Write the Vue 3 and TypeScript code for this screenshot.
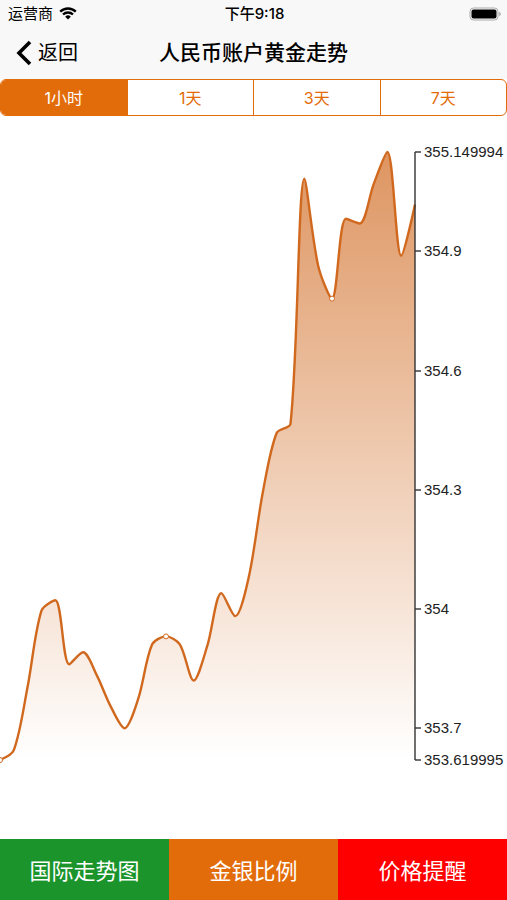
<script setup lang="ts">
import { computed, onBeforeUnmount, onMounted, ref } from 'vue'

interface Point {
  x: number
  y: number
}

const ranges = ['1小时', '1天', '3天', '7天']
const activeRange = ref(0)

const prices = [
  353.619995, 353.645, 353.805, 353.996, 354.022, 353.861, 353.891, 353.833,
  353.755, 353.7, 353.775, 353.911, 353.931, 353.911, 353.82, 353.909, 354.04,
  353.982, 354.083, 354.294, 354.443, 354.466, 355.083, 354.864, 354.781,
  354.982, 354.97, 355.068, 355.149994, 354.889, 355.018,
]
const ticks = [355.149994, 354.9, 354.6, 354.3, 354, 353.7, 353.619995]
const marked = [0, 12, 24]

const low = 353.619995
const high = 355.149994
const smoothness = 0.3
const margin = { top: 36, right: 92, bottom: 79 }

const chart = ref<SVGSVGElement | null>(null)
const size = ref({ width: 507, height: 723 })
let observer: ResizeObserver | undefined

function measure() {
  if (!chart.value) return
  const box = chart.value.getBoundingClientRect()
  size.value = { width: Math.round(box.width), height: Math.round(box.height) }
}

onMounted(() => {
  measure()
  observer = new ResizeObserver(measure)
  if (chart.value) observer.observe(chart.value)
})
onBeforeUnmount(() => observer?.disconnect())

const axisX = computed(() => size.value.width - margin.right)
const baseY = computed(() => size.value.height - margin.bottom)

function yOf(price: number): number {
  return baseY.value - ((price - low) / (high - low)) * (baseY.value - margin.top)
}

const points = computed<Point[]>(() =>
  prices.map((price, i) => ({
    x: (axisX.value * i) / (prices.length - 1),
    y: yOf(price),
  })),
)

function clamp(v: number, a: number, b: number): number {
  return Math.max(Math.min(a, b), Math.min(Math.max(a, b), v))
}

// Smooth curve whose control points never leave the span of their own segment.
const linePath = computed(() => {
  const pts = points.value
  let path = `M${pts[0].x} ${pts[0].y}`
  let out: Point = pts[0]
  for (let i = 1; i < pts.length; i++) {
    const prev = pts[i - 1]
    const p = pts[i]
    const next = pts[i + 1]
    let into: Point = p
    let nextOut: Point = p
    if (next) {
      const lenPrev = Math.hypot(p.x - prev.x, p.y - prev.y)
      const lenNext = Math.hypot(next.x - p.x, next.y - p.y)
      const ratio = lenNext / (lenNext + lenPrev)
      const ox = clamp(p.x + (next.x - prev.x) * smoothness * ratio, p.x, next.x)
      const oy = clamp(p.y + (next.y - prev.y) * smoothness * ratio, p.y, next.y)
      into = {
        x: clamp(p.x - ((ox - p.x) * lenPrev) / lenNext, prev.x, p.x),
        y: clamp(p.y - ((oy - p.y) * lenPrev) / lenNext, prev.y, p.y),
      }
      nextOut = {
        x: p.x + ((p.x - into.x) * lenNext) / lenPrev,
        y: p.y + ((p.y - into.y) * lenNext) / lenPrev,
      }
    }
    path += `C${out.x} ${out.y} ${into.x} ${into.y} ${p.x} ${p.y}`
    out = nextOut
  }
  return path
})

const areaPath = computed(() => `${linePath.value}V${baseY.value}H0Z`)
const axisPath = computed(() => `M${axisX.value} ${margin.top}V${baseY.value}`)
</script>

<template>
  <div class="screen">
    <header class="top">
      <div class="status">
        <div class="carrier">
          <span>运营商</span>
          <svg class="wifi" viewBox="0 0 18 13" aria-hidden="true">
            <path d="M1.2 4.6a11.2 11.2 0 0 1 15.6 0" />
            <path d="M4 7.5a7.2 7.2 0 0 1 10 0" />
            <path class="wifi-dot" d="M6.2 9.7a4 4 0 0 1 5.6 0L9 12.6z" />
          </svg>
        </div>
        <span class="time">下午9:18</span>
        <svg class="battery" viewBox="0 0 32 14" aria-hidden="true">
          <rect class="shell" x="1" y="1" width="28" height="12" rx="3.5" />
          <rect x="2.5" y="2.5" width="25" height="9" rx="2" />
          <path class="cap" d="M30.3 4.8q1.4.8 1.4 2.2t-1.4 2.2z" />
        </svg>
      </div>
      <nav class="nav">
        <button class="back" type="button">
          <svg viewBox="0 0 16 26" aria-hidden="true">
            <path d="M14 2 3 13l11 11" />
          </svg>
          <span>返回</span>
        </button>
        <h1>人民币账户黄金走势</h1>
      </nav>
    </header>

    <div class="segments">
      <button
        v-for="(label, i) in ranges"
        :key="label"
        type="button"
        :class="{ active: i === activeRange }"
        :aria-pressed="i === activeRange"
        @click="activeRange = i"
      >
        {{ label }}
      </button>
    </div>

    <svg ref="chart" class="chart">
      <defs>
        <linearGradient id="area-fill" x1="0" y1="0" x2="0" y2="1">
          <stop class="fill-top" offset="0" />
          <stop class="fill-bottom" offset="1" />
        </linearGradient>
      </defs>
      <path :d="areaPath" fill="url(#area-fill)" />
      <path class="line" :d="linePath" />
      <path class="axis" :d="axisPath" />
      <circle
        v-for="i in marked"
        :key="i"
        class="dot"
        :cx="points[i].x"
        :cy="points[i].y"
        r="2.5"
      />
      <g v-for="tick in ticks" :key="tick">
        <path class="axis" :d="`M${axisX} ${Math.round(yOf(tick))}h6`" />
        <text :x="axisX + 9" :y="Math.round(yOf(tick)) + 5">{{ tick }}</text>
      </g>
    </svg>

    <footer class="actions">
      <button class="green" type="button">国际走势图</button>
      <button class="orange" type="button">金银比例</button>
      <button class="red" type="button">价格提醒</button>
    </footer>
  </div>
</template>

<style>
body {
  margin: 0;
  background: #fff;
}
</style>

<style scoped>
.screen {
  display: flex;
  flex-direction: column;
  min-height: 100vh;
  font-family: Inter, 'Noto Sans CJK SC', sans-serif;
  color: #000;
}

button {
  margin: 0;
  padding: 0 0 2px;
  border: 0;
  background: none;
  font: inherit;
  color: inherit;
  cursor: pointer;
}

.top {
  background: #f8f8f8;
}

.status {
  display: grid;
  grid-template-columns: 1fr auto 1fr;
  align-items: center;
  height: 27px;
  padding: 0 6px 0 8px;
  font-size: 15px;
  line-height: 27px;
}

.carrier {
  display: flex;
  align-items: center;
  gap: 6px;
}

.wifi {
  width: 18px;
  height: 13px;
  fill: none;
  stroke: #000;
  stroke-width: 2.4;
}

.wifi .wifi-dot {
  fill: #000;
  stroke: none;
}

.time {
  font-weight: 500;
}

.battery {
  justify-self: end;
  width: 32px;
  height: 14px;
}

.battery .shell {
  fill: none;
  stroke: #aaa;
}

.battery .cap {
  fill: #999;
}

.nav {
  display: grid;
  grid-template-columns: 1fr auto 1fr;
  align-items: center;
  height: 52px;
}

.back {
  display: flex;
  align-items: center;
  justify-self: start;
  gap: 6px;
  padding: 0 0 0 16px;
  font-size: 20px;
  line-height: 48px;
}

.back svg {
  width: 16px;
  height: 26px;
  fill: none;
  stroke: #000;
  stroke-width: 3.6;
}

h1 {
  margin: 0;
  font-size: 21px;
  font-weight: 500;
  line-height: 48px;
}

.segments {
  display: flex;
  box-sizing: border-box;
  height: 37px;
  border: 1px solid #e36c0a;
  border-radius: 6px;
  overflow: hidden;
  font-size: 16px;
  color: #e36c0a;
}

.segments button {
  flex: 1;
}

.segments button + button {
  border-left: 1px solid #e36c0a;
}

.segments .active {
  background: #e36c0a;
  color: #fff;
}

.chart {
  display: block;
  flex: 1;
  width: 100%;
  min-height: 240px;
  overflow: hidden;
}

.fill-top {
  stop-color: #d0681e;
  stop-opacity: 0.7;
}

.fill-bottom {
  stop-color: #d0681e;
  stop-opacity: 0;
}

.line {
  fill: none;
  stroke: #d0681e;
  stroke-width: 2.4;
  stroke-linejoin: bevel;
}

.dot {
  fill: #fff;
  stroke: #d0681e;
}

.axis {
  fill: none;
  stroke: #333;
  stroke-width: 1.4;
}

.chart text {
  font-family: 'Liberation Sans', sans-serif;
  font-size: 15px;
  fill: #222;
}

.actions {
  display: flex;
  height: 61px;
  font-size: 22px;
  color: #fff;
}

.actions button {
  flex: 1;
}

.green {
  background: #1a942b;
}

.orange {
  background: #e36c0a;
}

.red {
  background: #f00;
}
</style>
